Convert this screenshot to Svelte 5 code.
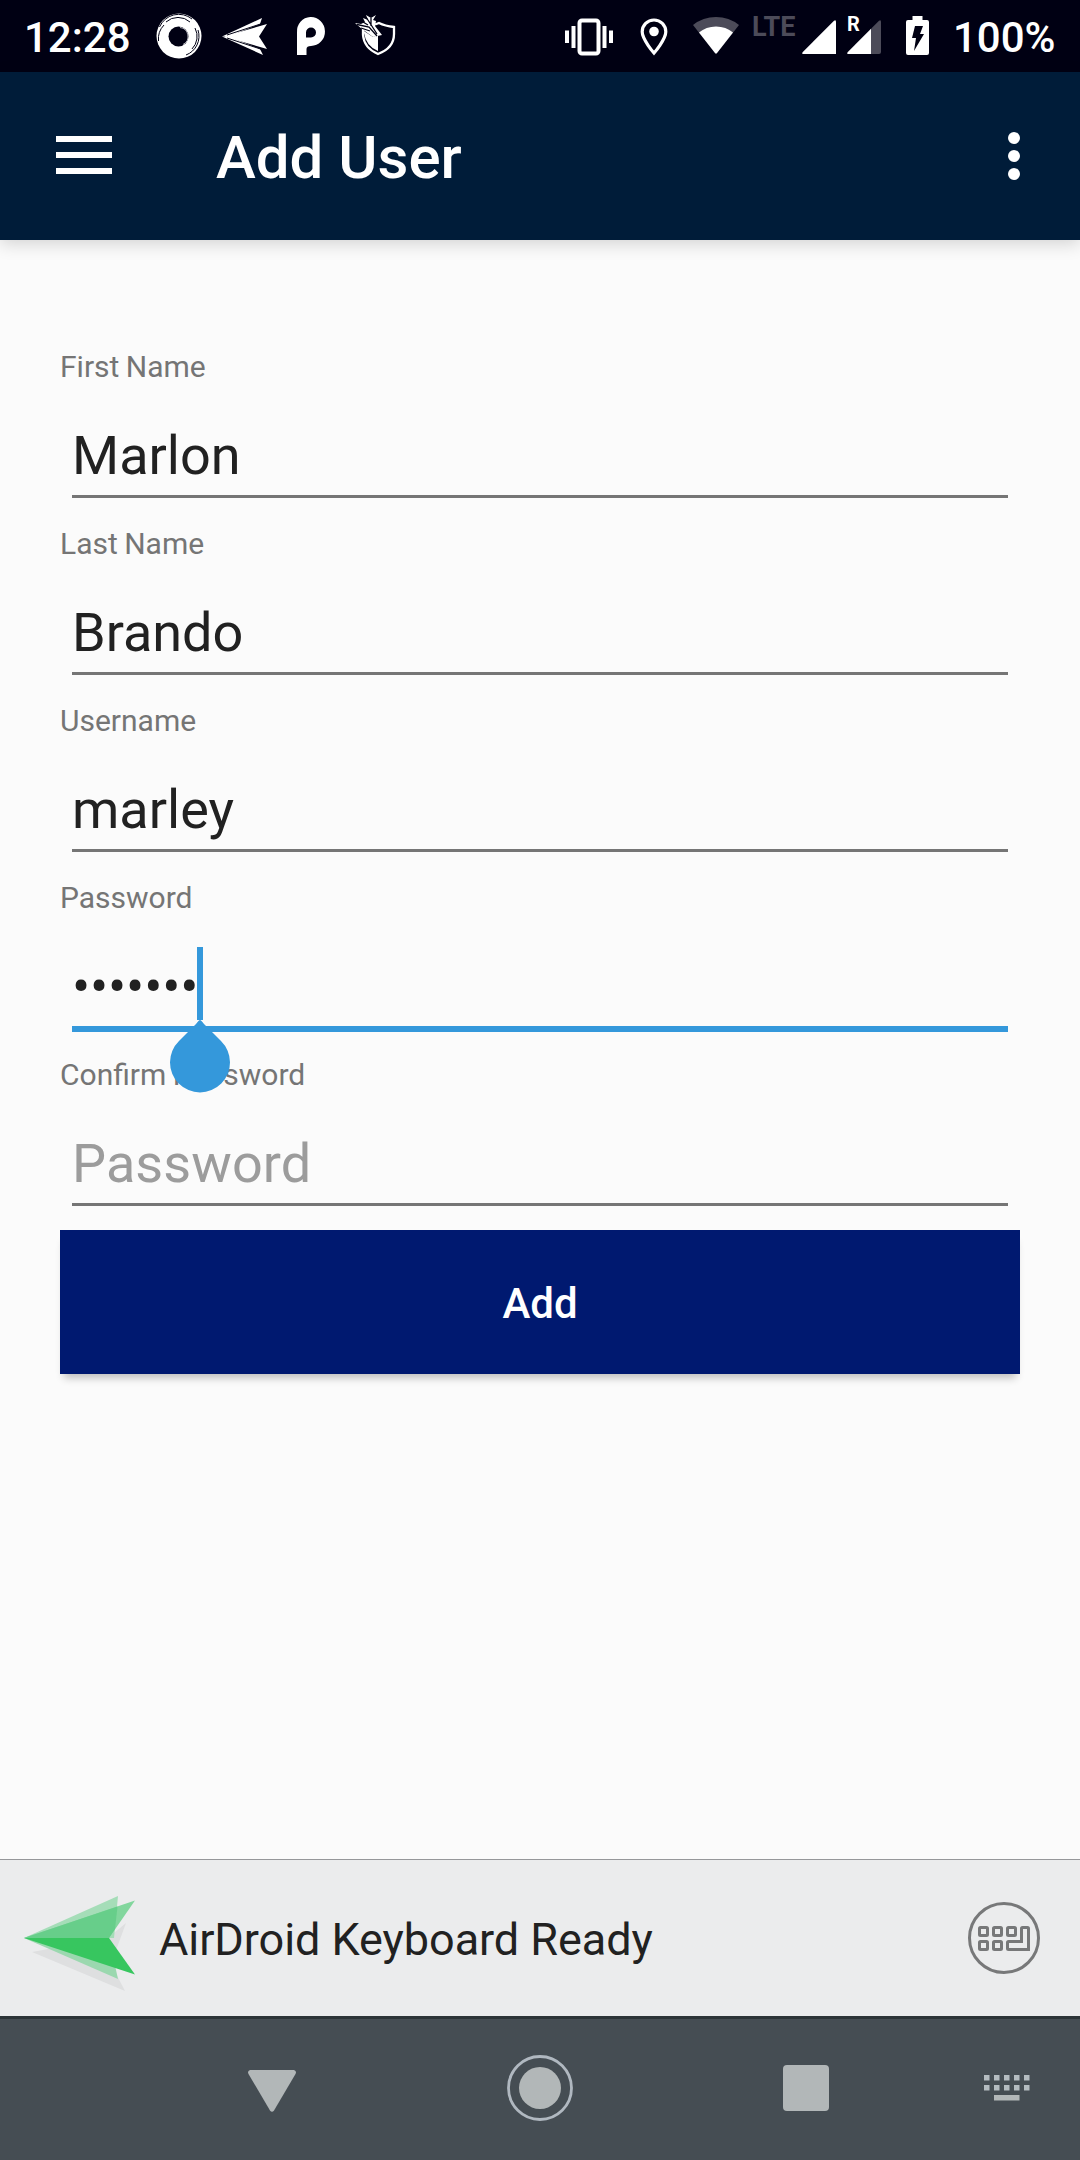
<script lang="ts">
  const fields = [
    { label: 'First Name', value: 'Marlon' },
    { label: 'Last Name', value: 'Brando' },
    { label: 'Username', value: 'marley' },
    { label: 'Password', value: '•••••••', focused: true },
    { label: 'Confirm Password', value: 'Password', placeholder: true }
  ];
  const keyColumns = [0, 10, 20, 30, 40];
</script>

<div class="screen">
  <div class="status">
    <span class="clock">12:28</span>
    <svg class="s-ring" width="46" height="46" viewBox="0 0 46 46">
      <circle cx="23" cy="23" r="22.5" fill="#fff" />
      <circle cx="22.5" cy="23.5" r="10" fill="#000013" />
      <path d="M3.500 14A21 21 0 0 1 36 6M2.500 28A20 20 0 0 1 8 12M42 17A20 20 0 0 1 30 42M39 15A18 18 0 0 1 36 36M10 9A18 18 0 0 1 34 9" fill="none" stroke="#000013" stroke-width="1" />
      <path d="M24 14.500A9 9 0 0 1 27 31.500" fill="none" stroke="#c8c8d0" stroke-width=".9" />
    </svg>
    <svg class="s-plane" width="46" height="38" viewBox="0 0 46 38">
      <path d="M0 18.500L40 0L38 6L8 18Z" fill="#fff" />
      <path d="M2 18.500L45 6L37 18.500L45 31Z" fill="#fff" />
      <path d="M0 18.500L8 19L38 31L41 37Z" fill="#fff" />
      <path d="M5 17L40 5.500M5 20L40 31.500" stroke="#000013" stroke-width="1" />
    </svg>
    <svg class="s-p" width="28" height="38" viewBox="0 0 28 38">
      <path fill-rule="evenodd" fill="#fff" d="M0 37V14.500A14 14.500 0 1 1 14 28Q9.500 28 9.500 31V37ZM9 19.500H14A5 5 0 1 0 9 14.500Z" />
    </svg>
    <svg class="s-shield" width="42" height="42" viewBox="0 0 42 42">
      <path d="M20 9.500L24 8Q30 11 39 12V19Q39 33 23 39Q9 33 8 20V13" fill="none" stroke="#fff" stroke-width="2.300" />
      <path d="M9 16L18 22L23 20V36Q11 31 9 18Z" fill="#fff" />
      <path d="M0 8L6 9L10 7L8 3L13 5L11 0L16 3L21 0L18 5L21 6L20 11L27 20L18 22L7 14Z" fill="#fff" />
      <path d="M2 9.500L14 12L22 21M11 2L22 19M6 13L15 16M16 3L16 11M8 7L13 10" fill="none" stroke="#000013" stroke-width="1.300" />
    </svg>
    <svg class="s-vibrate" width="48" height="38" viewBox="0 0 48 38">
      <rect x="14.500" y="3.500" width="19" height="33" rx="2.500" fill="none" stroke="#fff" stroke-width="4" />
      <path d="M2 13.500V26M8.500 9V31M39.500 9V31M46 13.500V26" stroke="#fff" stroke-width="4" />
    </svg>
    <svg class="s-pin" width="28" height="38" viewBox="0 0 28 38">
      <path d="M14 2A11.800 11.800 0 0 0 2.200 13.800C2.200 21.500 14 35 14 35S25.800 21.500 25.800 13.800A11.800 11.800 0 0 0 14 2Z" fill="none" stroke="#fff" stroke-width="3.200" />
      <circle cx="14" cy="13.500" r="4.800" fill="#fff" />
    </svg>
    <svg class="s-wifi" width="46" height="38" viewBox="0 0 46 38">
      <path d="M0 8Q10 0 23 0T46 8L24 36Q23 37 22 36Z" fill="#4c4b59" />
      <path d="M6 15.500Q13 9.500 23 9.500T40 15.500L24 36Q23 37 22 36Z" fill="#fff" />
    </svg>
    <span class="lte">LTE</span>
    <svg class="s-signal" width="34" height="34" viewBox="0 0 34 34">
      <path d="M32 .8Q34-.8 34 2V34H2Q-1 34 .8 32Z" fill="#fff" />
    </svg>
    <div class="roaming">
      <svg width="34" height="34" viewBox="0 0 34 34">
        <path d="M24 8.800L32 .8Q34-.8 34 2V32Q34 34 32 34H24Z" fill="#4c4b59" />
        <path d="M24 8.800V34H2Q-1 34 .8 32Z" fill="#fff" />
      </svg>
      <span>R</span>
    </div>
    <svg class="s-battery" width="23" height="40" viewBox="0 0 23 40">
      <path d="M6.500 0H16.500V4H21Q23 4 23 6V37Q23 39 21 39H2Q0 39 0 37V6Q0 4 2 4H6.500Z" fill="#fff" />
      <path d="M9 10H17L14 18H18L8 35L10 22H6Z" fill="#000013" />
    </svg>
    <span class="percent">100%</span>
  </div>

  <header>
    <svg width="56" height="38" viewBox="0 0 56 38">
      <path d="M0 3H56M0 19H56M0 35H56" stroke="#fff" stroke-width="6" />
    </svg>
    <h1>Add User</h1>
    <svg class="more" width="12" height="48" viewBox="0 0 12 48">
      <circle cx="6" cy="6" r="6" fill="#fff" />
      <circle cx="6" cy="24" r="6" fill="#fff" />
      <circle cx="6" cy="42" r="6" fill="#fff" />
    </svg>
  </header>

  <main>
    {#each fields as field}
      <div class="field">
        <div class="label">{field.label}</div>
        <div class="input" class:focused={field.focused} class:placeholder={field.placeholder}>
          <span>{field.value}</span>
          {#if field.focused}
            <i class="caret"></i>
            <svg class="handle" width="60" height="72" viewBox="0 0 60 72">
              <path d="M30 0Q31 0 34 4L51 21A30 30 0 1 1 9 21L26 4Q29 0 30 0Z" fill="#3498db" />
            </svg>
          {/if}
        </div>
      </div>
    {/each}
    <button>Add</button>
  </main>

  <div class="keyboard">
    <svg class="airdroid" width="112" height="98" viewBox="0 0 112 98">
      <path d="M8 57L101 96L87 69L102 28L84 43Z" fill="#dedfe0" />
      <path d="M0 43L94 1L90 43Z" fill="#a5ddb8" />
      <path d="M0 43L85 43L94 84Z" fill="#9bd8af" />
      <path d="M0 43L111 5.500L85 43Z" fill="#82d69d" />
      <path d="M0 43L93.500 11.500L91 34L85 43Z" fill="#67ce8a" />
      <path d="M0 43H85L111 79.500Z" fill="#37c65f" />
    </svg>
    <span>AirDroid Keyboard Ready</span>
    <svg class="switch" width="74" height="74" viewBox="0 0 74 74">
      <g fill="none" stroke="#777879" stroke-width="3">
        <circle cx="37" cy="37" r="34.500" />
        <rect x="12.500" y="26.500" width="8" height="8" rx="1" />
        <rect x="26.500" y="26.500" width="8" height="8" rx="1" />
        <rect x="40.500" y="26.500" width="8" height="8" rx="1" />
        <rect x="12.500" y="40.500" width="8" height="8" rx="1" />
        <rect x="26.500" y="40.500" width="8" height="8" rx="1" />
        <path d="M54.500 40.500V27.500Q54.500 26.500 55.500 26.500H60.500Q61.500 26.500 61.500 27.500V48.500H41.500Q40.500 48.500 40.500 47.500V41.500Q40.500 40.500 41.500 40.500Z" />
      </g>
    </svg>
  </div>

  <nav>
    <svg class="back" width="48" height="42" viewBox="0 0 48 42">
      <path d="M2 0H46Q49 1 47.500 4L26 40.500Q24 43 22 40.500L.5 4Q-1 1 2 0Z" fill="#b2b7b8" />
    </svg>
    <svg class="home" width="66" height="66" viewBox="0 0 66 66">
      <circle cx="33" cy="33" r="31.500" fill="none" stroke="#b0b8c0" stroke-width="2.800" />
      <circle cx="33" cy="33" r="21" fill="#b2b7b8" />
    </svg>
    <svg class="recent" width="46" height="46" viewBox="0 0 46 46">
      <rect width="46" height="46" rx="4" fill="#b2b7b8" />
    </svg>
    <svg class="ime" width="46" height="26" viewBox="0 0 46 26">
      {#each keyColumns as x}
        <rect {x} y="0" width="5.500" height="5.500" fill="#b4bcc0" />
        <rect {x} y="10" width="5.500" height="5.500" fill="#b4bcc0" />
      {/each}
      <rect x="10" y="20" width="25.500" height="5.500" fill="#b2b7b8" />
    </svg>
  </nav>
</div>

<style>
  :global(body) {
    margin: 0;
    background: #fbfbfb;
  }
  .screen {
    width: 1080px;
    height: 2160px;
    display: flex;
    flex-direction: column;
    background: #fbfbfb;
    font-family: Roboto, 'Liberation Sans', sans-serif;
    overflow: hidden;
  }
  svg {
    display: block;
    flex: none;
    overflow: visible;
  }
  .status {
    display: flex;
    align-items: flex-start;
    height: 72px;
    background: #000013;
    color: #fff;
    flex: none;
  }
  .clock,
  .percent {
    font-size: 42px;
    font-weight: 500;
    line-height: 49px;
    margin-top: 13px;
    white-space: nowrap;
  }
  .clock {
    width: 132px;
    padding-left: 24px;
  }
  .s-ring { margin: 13px 0 0; }
  .s-plane { margin: 18px 0 0 20px; }
  .s-p { margin: 18px 0 0 29px; }
  .s-shield { margin: 15px 0 0 30px; }
  .s-vibrate { margin: 17px 0 0 168px; }
  .s-pin { margin: 18px 0 0 27px; }
  .s-wifi { margin: 17px 0 0 25px; }
  .lte {
    width: 50px;
    margin: 11px 0 0 13px;
    font-size: 27px;
    font-weight: 700;
    line-height: 32px;
    color: #4c4b59;
    white-space: nowrap;
  }
  .s-signal { margin: 20px 0 0; }
  .roaming {
    position: relative;
    margin: 20px 0 0 11px;
  }
  .roaming span {
    position: absolute;
    left: 0;
    top: -8px;
    font-size: 20px;
    font-weight: 700;
    line-height: 24px;
  }
  .s-battery { margin: 16px 0 0 25px; }
  .percent { margin-left: 24px; }

  header {
    position: relative;
    display: flex;
    align-items: flex-start;
    height: 168px;
    flex: none;
    background: #001c39;
    box-shadow: 0 4px 16px rgba(0, 0, 0, 0.16);
    padding: 0 60px 0 56px;
  }
  header > svg { margin-top: 64px; }
  header .more { margin: 60px 0 0 auto; }
  h1 {
    margin: 51px 0 0 104px;
    font-size: 60px;
    line-height: 70px;
    font-weight: 500;
    color: #fff;
  }

  main {
    flex: 1;
    padding: 105px 60px 0;
  }
  .field {
    height: 177px;
    padding-top: 2px;
    box-sizing: border-box;
  }
  .label {
    font-size: 30px;
    line-height: 40px;
    word-spacing: -1px;
    color: #757575;
  }
  .input {
    position: relative;
    margin: 0 12px;
    padding: 37px 0 8px;
    font-size: 54px;
    line-height: 63px;
    color: #212121;
    border-bottom: 3px solid #757575;
  }
  .input.focused {
    border-bottom: 6px solid #3498db;
    letter-spacing: -0.18px;
  }
  .input.placeholder {
    color: #9c9c9c;
    letter-spacing: 0.1px;
  }
  .caret {
    position: absolute;
    left: 125px;
    top: 29px;
    width: 6px;
    height: 73px;
    background: #3498db;
  }
  .handle {
    position: absolute;
    left: 98px;
    top: 102px;
    z-index: 1;
  }
  button {
    display: block;
    width: 960px;
    height: 144px;
    border: 0;
    padding: 3px 0 0;
    background: #001970;
    color: #fff;
    font: 500 42px Roboto, 'Liberation Sans', sans-serif;
    box-shadow: 0 8px 8px -4px rgba(0, 0, 0, 0.24);
  }

  .keyboard {
    display: flex;
    align-items: flex-start;
    height: 157px;
    box-sizing: border-box;
    flex: none;
    border-top: 1px solid #96979a;
    background: #ebeced;
    padding: 0 39px 0 24px;
    color: #212121;
  }
  .airdroid { margin-top: 35px; }
  .keyboard span {
    font-size: 45px;
    line-height: 53px;
    letter-spacing: -0.06px;
    margin: 53px 0 0 23px;
  }
  .switch { margin: 41px 0 0 auto; }

  nav {
    display: flex;
    align-items: flex-start;
    height: 144px;
    box-sizing: border-box;
    flex: none;
    border-top: 3px solid #2c3438;
    background: #454d53;
  }
  .back { margin: 51px 0 0 248px; }
  .home { margin: 36px 0 0 211px; }
  .recent { margin: 46px 0 0 210px; }
  .ime { margin: 56px 0 0 155px; }
</style>
